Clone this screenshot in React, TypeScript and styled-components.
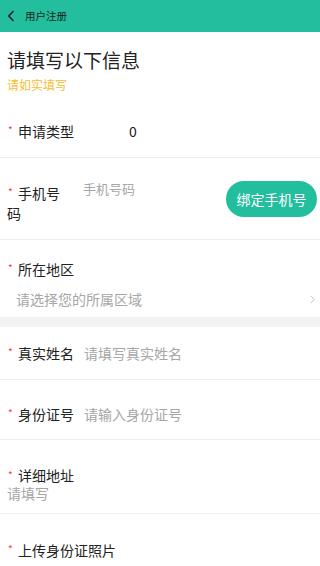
import styled, { createGlobalStyle } from "styled-components";

const GlobalStyle = createGlobalStyle`
    html, body {
        margin: 0;
        padding: 0;
        background: #ffffff;
        font-family: "Noto Sans CJK SC", "Noto Sans", sans-serif;
    }
    * {
        box-sizing: border-box;
    }
`;

const Page = styled.div`
    display: flex;
    flex-direction: column;
    width: 320px;
    min-height: 566px;
    background: #ffffff;
    overflow: hidden;
`;

const Header = styled.div`
    display: flex;
    align-items: center;
    height: 32px;
    padding-left: 7px;
    gap: 10px;
    background-color: #22be9e;
`;

const HeaderTitle = styled.div`
    font-size: 10.5px;
    color: #1c1c1c;
    line-height: 1;
`;

const Intro = styled.div`
    display: flex;
    flex-direction: column;
    padding: 15px 7px 3px;
`;

const Title = styled.div`
    font-size: 19px;
    line-height: 26px;
    color: #222222;
`;

const Subtitle = styled.div`
    margin-top: 4px;
    font-size: 12px;
    line-height: 16px;
    color: #f6bd30;
`;

const Row = styled.div<{ $top: number; $bottom: number; $divider?: boolean }>`
    display: flex;
    align-items: flex-start;
    padding: ${p => p.$top}px 3px ${p => p.$bottom}px 7px;
    border-bottom: ${p => (p.$divider ? "1px solid #eeeeee" : "none")};
`;

const Column = styled.div<{ $top: number; $bottom: number; $gap: number; $divider?: boolean }>`
    display: flex;
    flex-direction: column;
    gap: ${p => p.$gap}px;
    padding: ${p => p.$top}px 3px ${p => p.$bottom}px 7px;
    border-bottom: ${p => (p.$divider ? "1px solid #eeeeee" : "none")};
`;

const Label = styled.div<{ $width?: number; $lh?: number; $mt?: number }>`
    flex: none;
    width: ${p => (p.$width ? `${p.$width}px` : "auto")};
    white-space: ${p => (p.$width ? "normal" : "nowrap")};
    margin-top: ${p => p.$mt ?? 0}px;
    font-size: 14px;
    line-height: ${p => p.$lh ?? 20}px;
    color: #222222;
`;

const Star = styled.span`
    display: inline-block;
    width: 11px;
    height: 8px;
    padding-left: 1px;
    font-size: 10px;
    line-height: 10px;
    vertical-align: top;
    margin-top: 4px;
    color: #f33a3a;
`;

const Value = styled.div`
    font-size: 14px;
    line-height: 20px;
    color: #222222;
`;

const Placeholder = styled.div<{ $size?: number; $ml?: number; $lh?: number }>`
    flex: 1;
    margin-left: ${p => p.$ml ?? 0}px;
    font-size: ${p => p.$size ?? 14}px;
    line-height: ${p => p.$lh ?? 20}px;
    color: #a6a6a6;
    white-space: nowrap;
`;

const BindButton = styled.button`
    flex: none;
    width: 91px;
    height: 36px;
    margin-top: 2px;
    border: none;
    border-radius: 18px;
    background-color: #22be9e;
    color: #ffffff;
    font-family: inherit;
    font-size: 14px;
    padding: 0;
`;

const SelectLine = styled.div`
    display: flex;
    align-items: center;
    justify-content: space-between;
    padding-left: 9px;
    padding-right: 2px;
`;

const Band = styled.div`
    height: 10px;
    background-color: #f2f2f2;
`;

function Back() {
    return (
        <svg width="8" height="12" viewBox="0 0 8 12">
            <path d="M6.5 1 L1.8 6 L6.5 11" fill="none" stroke="#1c1c1c" strokeWidth="1.5" />
        </svg>
    );
}

function Chevron() {
    return (
        <svg width="5" height="9" viewBox="0 0 5 9">
            <path d="M0.8 0.8 L4 4.5 L0.8 8.2" fill="none" stroke="#c4c4c4" strokeWidth="1" />
        </svg>
    );
}

export default function App() {
    return (
        <Page>
            <GlobalStyle />
            <Header>
                <Back />
                <HeaderTitle>用户注册</HeaderTitle>
            </Header>

            <Intro>
                <Title>请填写以下信息</Title>
                <Subtitle>请如实填写</Subtitle>
            </Intro>

            <Row $top={25} $bottom={16} $divider>
                <Label $width={122}><Star>*</Star>申请类型</Label>
                <Value>0</Value>
            </Row>

            <Row $top={21} $bottom={16} $divider>
                <Label $width={66} $mt={4}><Star>*</Star>手机号码</Label>
                <Placeholder $size={13} $ml={10}>手机号码</Placeholder>
                <BindButton>绑定手机号</BindButton>
            </Row>

            <Column $top={19} $bottom={8} $gap={10}>
                <Label><Star>*</Star>所在地区</Label>
                <SelectLine>
                    <Placeholder>请选择您的所属区域</Placeholder>
                    <Chevron />
                </SelectLine>
            </Column>

            <Band />

            <Row $top={16} $bottom={16} $divider>
                <Label><Star>*</Star>真实姓名</Label>
                <Placeholder $ml={10}>请填写真实姓名</Placeholder>
            </Row>

            <Row $top={24} $bottom={15} $divider>
                <Label><Star>*</Star>身份证号</Label>
                <Placeholder $ml={10}>请输入身份证号</Placeholder>
            </Row>

            <Column $top={26} $bottom={11} $gap={0} $divider>
                <Label $lh={18}><Star>*</Star>详细地址</Label>
                <Placeholder $lh={18}>请填写</Placeholder>
            </Column>

            <Row $top={26} $bottom={20}>
                <Label><Star>*</Star>上传身份证照片</Label>
            </Row>
        </Page>
    );
}
